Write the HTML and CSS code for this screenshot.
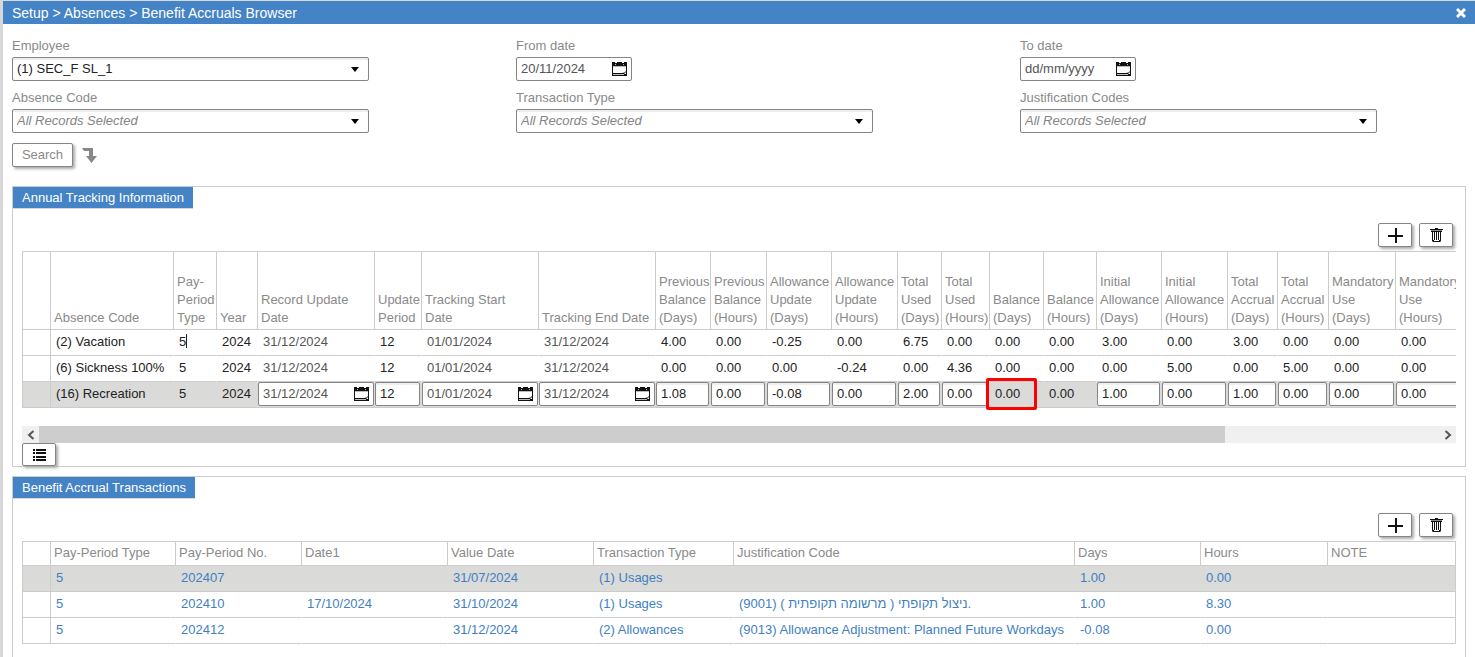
FILE: index.html
```html
<!DOCTYPE html>
<html lang="en">
<head>
<meta charset="utf-8">
<title>Benefit Accruals Browser</title>
<link rel="stylesheet" href="styles.css">
</head>
<body>
<svg class="defs" aria-hidden="true">
  <symbol id="i-cal" viewBox="0 0 15 14"><path fill="#111" fill-rule="evenodd" d="M0 0h3v1h2V0h5v1h2V0h3v14H0zM1 4v7h9q3 0 4-2V4z"/><path fill="#bbb" d="M3 2h1v1H3zM11 2h1v1h-1zM1 4h13v1H1zM1 12h11v1H1z"/><path fill="#fff" d="M12 12l2-2v2z"/></symbol>
  <symbol id="i-plus" viewBox="0 0 15 15"><path fill="#111" d="M7 0h2v7h6v2H9v6H7V9H0V7h7z"/></symbol>
  <symbol id="i-trash" viewBox="0 0 13 14"><path fill="#111" d="M5 0h3v1H5zM0 1h13v1H0zM1 3h11v1H1zM2 4h1v8h1v1h5v-1h1V4h1v9l-1 1H3l-1-1zM4 4h1v8H4zM6 4h1v8H6zM8 4h1v8H8z"/><path fill="#888" d="M1 2h11v1H1z"/></symbol>
  <symbol id="i-list" viewBox="0 0 13 12"><path fill="#111" d="M0 0h2v2H0zM3 0h10v2H3zM0 3h2v2H0zM3 3h10v2H3zM0 7h2v2H0zM3 7h10v2H3zM0 10h2v2H0zM3 10h10v2H3z"/></symbol>
</svg>
<main class="page">
  <header class="bar">
    <h1>Setup &gt; Absences &gt; Benefit Accruals Browser</h1>
    <button class="close" type="button" aria-label="Close"><svg width="10" height="10" viewBox="0 0 10 10"><path stroke="#fff" stroke-width="3" d="M1 1l8 8M9 1l-8 8"/></svg></button>
  </header>
  <form class="filters">
    <div class="field"><label for="emp">Employee</label><select id="emp"><option>(1) SEC_F SL_1</option></select></div>
    <div class="field"><label for="from">From date</label><div class="date short"><input id="from" value="20/11/2024"><button type="button" aria-label="Pick from date"><svg><use href="#i-cal"/></svg></button></div></div>
    <div class="field"><label for="to">To date</label><div class="date short"><input id="to" value="dd/mm/yyyy"><button type="button" aria-label="Pick to date"><svg><use href="#i-cal"/></svg></button></div></div>
    <div class="field"><label for="abs">Absence Code</label><select id="abs" class="any"><option>All Records Selected</option></select></div>
    <div class="field"><label for="tt">Transaction Type</label><select id="tt" class="any"><option>All Records Selected</option></select></div>
    <div class="field"><label for="jc">Justification Codes</label><select id="jc" class="any"><option>All Records Selected</option></select></div>
    <div class="actions"><button class="btn search" type="button">Search</button><svg width="15" height="15" viewBox="0 0 15 15" aria-hidden="true"><path fill="#888" d="M0 0h11v8h4l-5.500 7L4 8h3V3H2z"/></svg></div>
  </form>

  <section class="panel">
    <h2>Annual Tracking Information</h2>
    <div class="tools"><button class="btn" type="button" aria-label="Add"><svg class="plus"><use href="#i-plus"/></svg></button><button class="btn" type="button" aria-label="Delete"><svg class="trash"><use href="#i-trash"/></svg></button></div>
    <div class="scroller">
      <table class="tracking">
        <colgroup><col class="w28"><col class="w123"><col class="w43"><col class="w41"><col class="w117"><col class="w47"><col class="w117"><col class="w117"><col class="w55"><col class="w56"><col class="w65"><col class="w66"><col class="w44"><col class="w48"><col class="w54"><col class="w53"><col class="w65"><col class="w66"><col class="w50"><col class="w51"><col class="w67"><col class="w67"></colgroup>
        <thead><tr><th></th><th>Absence Code</th><th>Pay-<br>Period<br>Type</th><th>Year</th><th>Record Update<br>Date</th><th>Update<br>Period</th><th>Tracking Start<br>Date</th><th>Tracking End Date</th><th>Previous<br>Balance<br>(Days)</th><th>Previous<br>Balance<br>(Hours)</th><th>Allowance<br>Update<br>(Days)</th><th>Allowance<br>Update<br>(Hours)</th><th>Total<br>Used<br>(Days)</th><th>Total<br>Used<br>(Hours)</th><th>Balance<br>(Days)</th><th>Balance<br>(Hours)</th><th>Initial<br>Allowance<br>(Days)</th><th>Initial<br>Allowance<br>(Hours)</th><th>Total<br>Accrual<br>(Days)</th><th>Total<br>Accrual<br>(Hours)</th><th>Mandatory<br>Use<br>(Days)</th><th>Mandatory<br>Use<br>(Hours)</th></tr></thead>
        <tbody>
          <tr><td></td><td>(2) Vacation</td><td>5<span class="caret"></span></td><td>2024</td><td class="d">31/12/2024</td><td>12</td><td class="d">01/01/2024</td><td class="d">31/12/2024</td><td>4.00</td><td>0.00</td><td>-0.25</td><td>0.00</td><td>6.75</td><td>0.00</td><td>0.00</td><td>0.00</td><td>3.00</td><td>0.00</td><td>3.00</td><td>0.00</td><td>0.00</td><td>0.00</td></tr>
          <tr><td></td><td>(6) Sickness 100%</td><td>5</td><td>2024</td><td class="d">31/12/2024</td><td>12</td><td class="d">01/01/2024</td><td class="d">31/12/2024</td><td>0.00</td><td>0.00</td><td>0.00</td><td>-0.24</td><td>0.00</td><td>4.36</td><td>0.00</td><td>0.00</td><td>0.00</td><td>5.00</td><td>0.00</td><td>5.00</td><td>0.00</td><td>0.00</td></tr>
          <tr class="sel"><td></td><td>(16) Recreation</td><td>5</td><td>2024</td>
            <td class="e"><div class="date"><input aria-label="Record update date" value="31/12/2024"><button type="button" aria-label="Pick date"><svg><use href="#i-cal"/></svg></button></div></td>
            <td class="e"><input class="num" aria-label="Update period" value="12"></td>
            <td class="e"><div class="date"><input aria-label="Tracking start date" value="01/01/2024"><button type="button" aria-label="Pick date"><svg><use href="#i-cal"/></svg></button></div></td>
            <td class="e"><div class="date"><input aria-label="Tracking end date" value="31/12/2024"><button type="button" aria-label="Pick date"><svg><use href="#i-cal"/></svg></button></div></td>
            <td class="e"><input class="num" aria-label="Previous balance days" value="1.08"></td>
            <td class="e"><input class="num" aria-label="Previous balance hours" value="0.00"></td>
            <td class="e"><input class="num" aria-label="Allowance update days" value="-0.08"></td>
            <td class="e"><input class="num" aria-label="Allowance update hours" value="0.00"></td>
            <td class="e"><input class="num" aria-label="Total used days" value="2.00"></td>
            <td class="e"><input class="num" aria-label="Total used hours" value="0.00"></td>
            <td class="marked">0.00</td><td>0.00</td>
            <td class="e"><input class="num" aria-label="Initial allowance days" value="1.00"></td>
            <td class="e"><input class="num" aria-label="Initial allowance hours" value="0.00"></td>
            <td class="e"><input class="num" aria-label="Total accrual days" value="1.00"></td>
            <td class="e"><input class="num" aria-label="Total accrual hours" value="0.00"></td>
            <td class="e"><input class="num" aria-label="Mandatory use days" value="0.00"></td>
            <td class="e"><input class="num" aria-label="Mandatory use hours" value="0.00"></td></tr>
        </tbody>
      </table>
    </div>
    <div class="hscroll">
      <button type="button" aria-label="Scroll left"><svg width="8" height="10" viewBox="0 0 8 10"><path fill="none" stroke="#555" stroke-width="2" d="M6.500 1l-4.500 4 4.500 4"/></svg></button>
      <div class="track"><div class="thumb"></div></div>
      <button type="button" aria-label="Scroll right"><svg width="8" height="10" viewBox="0 0 8 10"><path fill="none" stroke="#555" stroke-width="2" d="M1.500 1L6 5 1.500 9"/></svg></button>
    </div>
    <button class="btn listbtn" type="button" aria-label="List view"><svg class="list"><use href="#i-list"/></svg></button>
  </section>

  <section class="panel last">
    <h2>Benefit Accrual Transactions</h2>
    <div class="tools"><button class="btn" type="button" aria-label="Add"><svg class="plus"><use href="#i-plus"/></svg></button><button class="btn" type="button" aria-label="Delete"><svg class="trash"><use href="#i-trash"/></svg></button></div>
    <table class="trans">
      <colgroup><col class="w28"><col class="w125"><col class="w126"><col class="w146"><col class="w146"><col class="w140"><col class="w341"><col class="w126"><col class="w127"><col class="w128"></colgroup>
      <thead><tr><th></th><th>Pay-Period Type</th><th>Pay-Period No.</th><th>Date1</th><th>Value Date</th><th>Transaction Type</th><th>Justification Code</th><th>Days</th><th>Hours</th><th>NOTE</th></tr></thead>
      <tbody>
        <tr class="sel"><td></td><td>5</td><td>202407</td><td></td><td>31/07/2024</td><td>(1) Usages</td><td></td><td>1.00</td><td>0.00</td><td></td></tr>
        <tr><td></td><td>5</td><td>202410</td><td>17/10/2024</td><td>31/10/2024</td><td>(1) Usages</td><td>(9001) ניצול תקופתי ( מרשומה תקופתית ).</td><td>1.00</td><td>8.30</td><td></td></tr>
        <tr><td></td><td>5</td><td>202412</td><td></td><td>31/12/2024</td><td>(2) Allowances</td><td>(9013) Allowance Adjustment: Planned Future Workdays</td><td>-0.08</td><td>0.00</td><td></td></tr>
      </tbody>
    </table>
  </section>
</main>
</body>
</html>
```
FILE: styles.css
```css
* { box-sizing: border-box; }
body {
  margin: 0;
  padding: 1px 0 0 3px;
  height: 100vh;
  overflow: hidden;
  background: #d8d8da;
  color: #222;
  font: 13px/18px "Liberation Sans", Arial, sans-serif;
}
input, select, button { font: inherit; color: inherit; margin: 0; }
button { display: flex; align-items: center; justify-content: center; padding: 0; border: 0; background: none; }
svg { display: block; flex: none; }
.defs { position: absolute; width: 0; height: 0; }

.page { display: flex; flex-direction: column; height: 100%; background: #fff; }
.bar { display: flex; align-items: center; justify-content: space-between; flex: none; height: 23px; padding: 0 9px; background: #4483c6; color: #fff; }
.bar h1 { margin: 0; font-size: 14px; font-weight: normal; }

.filters { display: grid; grid-template-columns: 504fr 504fr 446fr; row-gap: 8px; padding: 13px 9px 0; color: #8a8a8a; }
.field label { display: block; margin-bottom: 2px; }
select {
  display: block;
  width: 357px;
  max-width: 100%;
  height: 24px;
  padding: 0 4px;
  border: 1px solid #858585;
  border-radius: 2px;
  appearance: none;
  color: #222;
  background: #fff url("data:image/svg+xml,%3Csvg xmlns='http://www.w3.org/2000/svg' width='8' height='5'%3E%3Cpath d='M0 0h8L4 5z'/%3E%3C/svg%3E") no-repeat right 9px center;
  box-shadow: inset 0 2px 1px #eee;
}
.any { font-style: italic; color: #858585; }
.date { display: flex; align-items: center; height: 24px; padding-right: 4px; border: 1px solid #858585; border-radius: 2px; background: #fff; }
.date input { flex: 1; min-width: 0; width: 0; height: 22px; padding: 0 0 1px 4px; border: 0; background: none; color: #555; outline: 0; }
.date svg { width: 15px; height: 14px; }
.short { width: 116px; }
.actions { display: flex; align-items: center; gap: 9px; padding-top: 2px; grid-column: 1 / -1; }
.btn { width: 34px; height: 24px; border: 1px solid #858585; border-radius: 2px; background: #fff; box-shadow: 2px 2px 3px #aaa; }
.search { width: 61px; }

.panel { flex: none; margin: 19px 9px 0; padding: 0 9px; border: 1px solid #ccc; }
.panel h2 { width: fit-content; height: 22px; margin: 0 0 14px -9px; padding: 0 9px; border-bottom: 1px solid #d5d5d5; background: #4483c6; color: #fff; font-size: 13px; font-weight: normal; line-height: 21px; }
.panel.last { flex: 1; margin-top: 9px; border-bottom: 0; }
.tools { display: flex; justify-content: flex-end; gap: 7px; margin: 0 3px 4px 0; }
.plus { width: 15px; height: 15px; }
.trash { width: 13px; height: 14px; }
.list { width: 13px; height: 12px; }
.scroller { overflow: hidden; padding-bottom: 18px; }

table { table-layout: fixed; border-collapse: separate; border-spacing: 0; border: 1px solid #ccc; border-width: 1px 0 0 1px; }
.tracking { width: 1441px; }
.trans { width: 100%; color: #3f7fc3; }
th, td { overflow: hidden; border: solid #ccc; border-width: 0 1px 1px 0; text-align: left; font-weight: normal; white-space: nowrap; }
th { padding: 0 0 2px 3px; vertical-align: bottom; color: #8a8a8a; }
td { height: 26px; padding: 0 0 1px 5px; border-right-color: transparent; vertical-align: middle; }
td:first-child { border-right-color: #ccc; }
.trans td:last-child { border-right-color: #ccc; }
.tracking th { height: 78px; }
.trans th { height: 24px; padding-bottom: 3px; }
.d { color: #555; }
.sel td { background: #dadad8; }
.sel .e { padding: 0 0 1px; }
.num { display: block; width: calc(100% - 1px); height: 24px; padding: 0 0 1px 4px; border: 1px solid #858585; border-radius: 2px; background: #fff; box-shadow: inset 0 2px 1px #eee; }
.caret { display: inline-block; width: 1px; height: 14px; background: #222; vertical-align: -2px; }
.marked { position: relative; overflow: visible; }
.marked::after { content: ""; position: absolute; inset: -4px 6px -3px -4px; border: 3px solid #f00; border-radius: 2px; z-index: 1; }

.w28 { width: 28px; } .w41 { width: 41px; } .w43 { width: 43px; } .w44 { width: 44px; }
.w47 { width: 47px; } .w48 { width: 48px; } .w50 { width: 50px; } .w51 { width: 51px; }
.w53 { width: 53px; } .w54 { width: 54px; } .w55 { width: 55px; } .w56 { width: 56px; }
.w65 { width: 65px; } .w66 { width: 66px; } .w67 { width: 67px; } .w117 { width: 117px; }
.w123 { width: 123px; } .w125 { width: 125px; } .w126 { width: 126px; } .w127 { width: 127px; }
.w128 { width: 128px; } .w140 { width: 140px; } .w146 { width: 146px; } .w341 { width: 341px; }

.hscroll { display: flex; height: 17px; background: #f0f0f0; }
.hscroll button { width: 17px; }
.track { flex: 1; }
.thumb { width: 84.7%; height: 100%; background: #cdcdcd; }
.listbtn { height: 23px; }
```
